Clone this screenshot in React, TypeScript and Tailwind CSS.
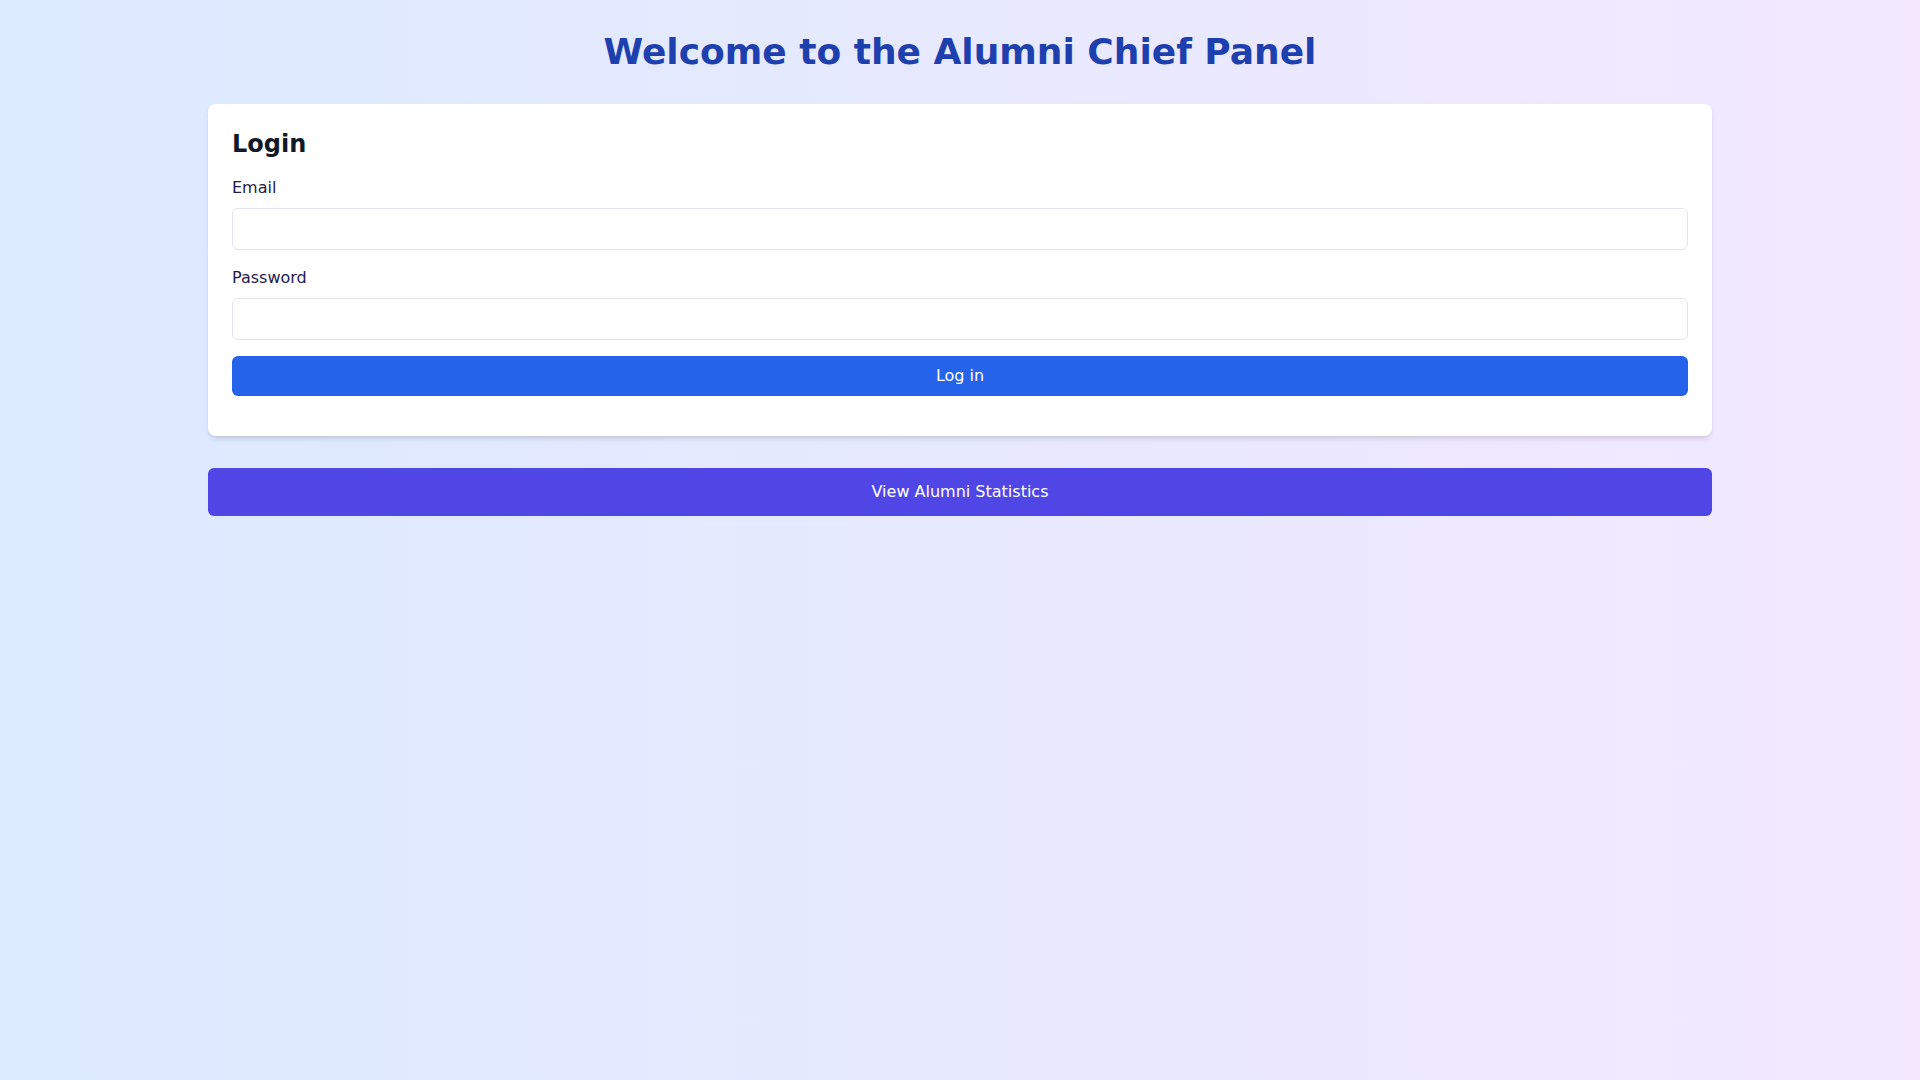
import React from "react";

export default function App() {
  return (
    <div
      className="min-h-screen p-4 bg-linear-to-r from-[#dbeafe] to-[#f3e8ff]"
      style={{ fontFamily: '"DejaVu Sans", sans-serif' }}
    >
      <div className="container mx-auto p-4">
        <h1 className="text-4xl font-bold text-center text-[#1e40af] mb-8">
          Welcome to the Alumni Chief Panel
        </h1>
        <div className="bg-white rounded-lg shadow-md p-6 mb-8">
          <h2 className="text-2xl font-bold text-[#111827] mb-4">Login</h2>
          <form onSubmit={(e) => e.preventDefault()}>
            <div className="mb-4">
              <label className="block text-[#1e1b4b] mb-2">Email</label>
              <input
                type="email"
                className="w-full px-3 py-2 border border-[#e3e2f0] rounded-md bg-white outline-none"
              />
            </div>
            <div className="mb-4">
              <label className="block text-[#1e1b4b] mb-2">Password</label>
              <input
                type="password"
                className="w-full px-3 py-2 border border-[#e3e2f0] rounded-md bg-white outline-none"
              />
            </div>
            <div className="mb-4">
              <button
                type="submit"
                className="w-full py-2 bg-[#2563eb] text-white rounded-md"
              >
                Log in
              </button>
            </div>
          </form>
        </div>
        <button className="w-full py-3 bg-[#4f46e5] text-white rounded-md">
          View Alumni Statistics
        </button>
      </div>
    </div>
  );
}
